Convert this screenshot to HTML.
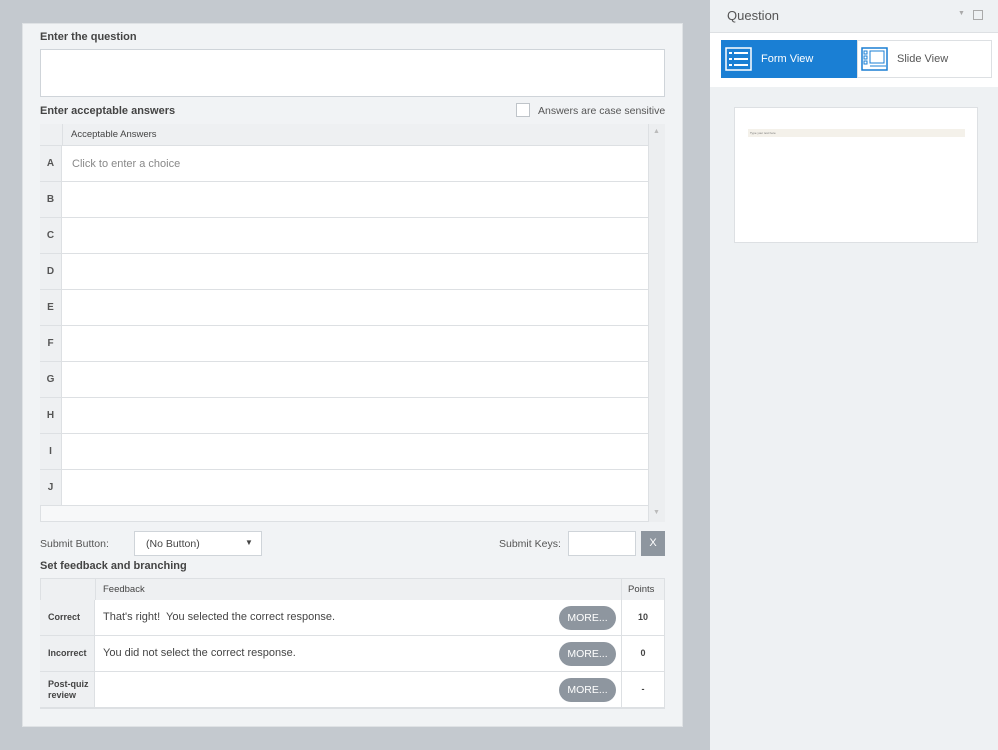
<!DOCTYPE html><html><head><style>
*{box-sizing:border-box;margin:0;padding:0}
body{width:998px;height:750px;background:#c4c9cf;font-family:"Liberation Sans",sans-serif;position:relative;overflow:hidden;color:#444}
.a{position:absolute}
.panel{left:22px;top:23px;width:661px;height:704px;background:#f1f3f5;border:1px solid #dfe2e5}
.lbl{font-size:11px;font-weight:bold;color:#444}
.row{position:absolute;left:40px;width:608px;height:36px;border-bottom:1px solid #dde0e3;background:#fff}
.row b{position:absolute;left:0;top:0;width:22px;height:35px;background:#eef0f2;border-right:1px solid #dde0e3;font-size:10px;color:#555;text-align:center;line-height:35px}
.fr{position:absolute;left:40px;width:624px;height:36px;border-bottom:1px solid #dde0e3;background:#fff}
.fr .c1{position:absolute;left:0;top:0;width:55px;height:35px;background:#eef0f2;border-right:1px solid #dde0e3;font-size:9px;font-weight:bold;color:#444;padding-left:8px;display:flex;align-items:center;line-height:11px}
.fr .t{position:absolute;left:63px;top:11px;font-size:11px;color:#444}
.fr .m{position:absolute;left:519px;top:6px;width:57px;height:24px;border-radius:12px;background:#8e969f;color:#fff;font-size:10.5px;text-align:center;line-height:24px}
.fr .p{position:absolute;left:581px;top:0;width:43px;height:35px;border-left:1px solid #dde0e3;font-size:9px;font-weight:bold;text-align:center;line-height:35px}
</style></head><body>
<div class="a panel"></div>
<div class="a lbl" style="left:40px;top:31px">Enter the question</div>
<div class="a" style="left:40px;top:49px;width:625px;height:48px;background:#fff;border:1px solid #cfd4d9"></div>
<div class="a lbl" style="left:40px;top:105px">Enter acceptable answers</div>
<div class="a" style="left:516px;top:103px;width:14px;height:14px;border:1px solid #bfc4c9;background:#fff"></div>
<div class="a" style="left:538px;top:105px;font-size:10.5px;color:#555">Answers are case sensitive</div>
<div class="a" style="left:40px;top:124px;width:625px;height:398px;background:#f7f8f9;border:1px solid #dde0e3"></div>
<div class="a" style="left:40px;top:124px;width:608px;height:22px;background:#eef0f2;border-bottom:1px solid #dde0e3"></div>
<div class="a" style="left:62px;top:124px;width:1px;height:22px;background:#dde0e3"></div>
<div class="a" style="left:71px;top:129px;font-size:9.5px;color:#444">Acceptable Answers</div>
<div class="a" style="left:648px;top:124px;width:17px;height:398px;background:#eceef0;border-left:1px solid #dde0e3"></div>
<div class="a" style="left:653px;top:128px;font-size:7px;color:#bbb">▲</div>
<div class="a" style="left:653px;top:509px;font-size:7px;color:#bbb">▼</div>
<div class="row" style="top:146px"><b>A</b><span style="position:absolute;left:32px;top:12px;font-size:11px;color:#888">Click to enter a choice</span></div>
<div class="row" style="top:182px"><b>B</b></div>
<div class="row" style="top:218px"><b>C</b></div>
<div class="row" style="top:254px"><b>D</b></div>
<div class="row" style="top:290px"><b>E</b></div>
<div class="row" style="top:326px"><b>F</b></div>
<div class="row" style="top:362px"><b>G</b></div>
<div class="row" style="top:398px"><b>H</b></div>
<div class="row" style="top:434px"><b>I</b></div>
<div class="row" style="top:470px"><b>J</b></div>
<div class="a" style="left:40px;top:538px;font-size:10.5px;color:#555">Submit Button:</div>
<div class="a" style="left:134px;top:531px;width:128px;height:25px;background:#fff;border:1px solid #cfd4d9;font-size:10.5px;color:#444;padding:6px 0 0 11px">(No Button)<span style="position:absolute;left:110px;top:6px;font-size:8px">▼</span></div>
<div class="a" style="left:499px;top:538px;font-size:10.5px;color:#555">Submit Keys:</div>
<div class="a" style="left:568px;top:531px;width:68px;height:25px;background:#fff;border:1px solid #cfd4d9"></div>
<div class="a" style="left:641px;top:531px;width:24px;height:25px;background:#8e969f;color:#fff;font-size:11px;text-align:center;line-height:25px">X</div>
<div class="a lbl" style="left:40px;top:560px">Set feedback and branching</div>
<div class="a" style="left:40px;top:578px;width:625px;height:131px;border:1px solid #dde0e3;background:#eef0f2"></div>
<div class="a" style="left:95px;top:578px;width:1px;height:22px;background:#dde0e3"></div>
<div class="a" style="left:621px;top:578px;width:1px;height:22px;background:#dde0e3"></div>
<div class="a" style="left:103px;top:584px;font-size:9.5px">Feedback</div>
<div class="a" style="left:628px;top:584px;font-size:9.5px">Points</div>
<div class="fr" style="top:600px"><div class="c1">Correct</div><div class="t">That's right!&nbsp; You selected the correct response.</div><div class="m">MORE...</div><div class="p">10</div></div>
<div class="fr" style="top:636px"><div class="c1">Incorrect</div><div class="t">You did not select the correct response.</div><div class="m">MORE...</div><div class="p">0</div></div>
<div class="fr" style="top:672px"><div class="c1">Post-quiz<br>review</div><div class="m">MORE...</div><div class="p">-</div></div>

<div class="a" style="left:710px;top:0;width:288px;height:750px;background:#eef1f3"></div>
<div class="a" style="left:710px;top:32px;width:288px;height:55px;background:#fff;border-top:1px solid #dde0e3"></div>
<div class="a" style="left:727px;top:8px;font-size:13px;color:#555">Question</div>
<div class="a" style="left:958px;top:10px;font-size:7px;color:#aaa">▼</div>
<div class="a" style="left:973px;top:10px;width:10px;height:10px;border:1px solid #aaa"></div>
<div class="a" style="left:721px;top:40px;width:136px;height:38px;background:#1a7fd4"></div>
<svg class="a" style="left:725px;top:47px" width="27" height="24"><rect x="1" y="1" width="25" height="22" fill="none" stroke="#fff" stroke-width="1.5"/><path d="M4 6h3M9 6h14M4 12h3M9 12h14M4 18h3M9 18h14" stroke="#fff" stroke-width="2"/></svg>
<div class="a" style="left:761px;top:53px;font-size:11px;color:#fff">Form View</div>
<div class="a" style="left:857px;top:40px;width:135px;height:38px;background:#fff;border:1px solid #dde0e3"></div>
<svg class="a" style="left:861px;top:47px" width="27" height="24"><rect x="1" y="1" width="25" height="22" fill="none" stroke="#1a7fd4" stroke-width="1.5"/><rect x="3" y="4" width="3" height="3" fill="none" stroke="#1a7fd4"/><rect x="3" y="9" width="3" height="3" fill="none" stroke="#1a7fd4"/><rect x="3" y="14" width="3" height="3" fill="none" stroke="#1a7fd4"/><rect x="9" y="4" width="14" height="12" fill="none" stroke="#1a7fd4"/><path d="M9 19h16" stroke="#1a7fd4"/></svg>
<div class="a" style="left:897px;top:53px;font-size:11px;color:#555">Slide View</div>
<div class="a" style="left:734px;top:107px;width:244px;height:136px;background:#fff;border:1px solid #dde0e3"></div>
<div class="a" style="left:748px;top:129px;width:217px;height:8px;background:#f4f1ea;font-size:3px;color:#777;padding:2px">Type your text here</div>
</body></html>
